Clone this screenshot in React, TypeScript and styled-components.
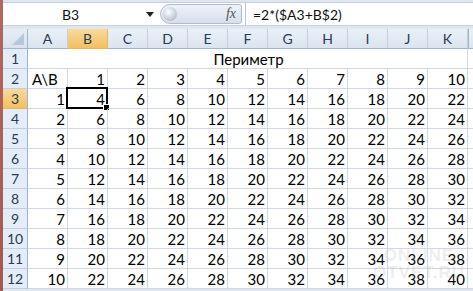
import styled, { createGlobalStyle } from "styled-components";

const GlobalStyle = createGlobalStyle`
  html, body {
    margin: 0;
    padding: 0;
    background: #ffffff;
  }
  body {
    font-family: Lato, "Open Sans", "Liberation Sans", sans-serif;
  }
`;

const COLS = ["A", "B", "C", "D", "E", "F", "G", "H", "I", "J", "K"];
const SEL_COL = 1;
const SEL_ROW = 3;

const Window = styled.div`
  display: flex;
  width: 473px;
  height: 291px;
  overflow: hidden;
  position: relative;
`;

const Edge = styled.div`
  width: 3px;
  background: linear-gradient(#b5675f, #a55850);
  flex-shrink: 0;
`;

const Main = styled.div`
  flex: 1;
  display: flex;
  flex-direction: column;
  background: #dfe6ef;
`;

const FormulaBar = styled.div`
  display: flex;
  align-items: stretch;
  height: 22px;
  margin-top: 2px;
  background: #ffffff;
  border-top: 1px solid #c5d0de;
  border-bottom: 1px solid #c5d0de;
`;

const NameBox = styled.div`
  width: 157px;
  display: flex;
  align-items: center;
  position: relative;
  font-size: 14px;
  color: #111;
`;

const NameText = styled.span`
  flex: 1;
  text-align: center;
  padding-right: 8px;
`;

const Arrow = styled.span`
  width: 0;
  height: 0;
  border-left: 4px solid transparent;
  border-right: 4px solid transparent;
  border-top: 5px solid #222;
  margin-right: 6px;
`;

const FxButton = styled.div`
  width: 82px;
  margin: 1px 0;
  display: flex;
  align-items: center;
  justify-content: space-between;
  border-radius: 11px 3px 3px 11px;
  background: linear-gradient(#eef2f8, #d6dfeb);
  border: 1px solid #aebdd0;
  box-sizing: border-box;
`;

const Knob = styled.span`
  width: 14px;
  height: 14px;
  border-radius: 50%;
  margin-left: 2px;
  background: radial-gradient(circle at 40% 35%, #ffffff, #b9c4d1 70%, #9aa8b9);
`;

const Fx = styled.span`
  font-family: "Liberation Serif", serif;
  font-style: italic;
  font-size: 14px;
  color: #555;
  margin-right: 5px;
`;

const FormulaInput = styled.div`
  flex: 1;
  display: flex;
  align-items: center;
  padding-left: 7px;
  margin-left: 3px;
  border-left: 1px solid #b8c5d6;
  font-size: 14px;
  color: #111;
`;

const Sheet = styled.div`
  margin-top: 3px;
  display: grid;
  grid-template-columns: 25px repeat(11, 40px) 1fr;
  grid-auto-rows: 20px;
  background: #ffffff;
`;

const Corner = styled.div`
  background: linear-gradient(#e7edf5, #d9e2ee);
  border-right: 1px solid #9eb6ce;
  border-bottom: 1px solid #9eb6ce;
  box-sizing: border-box;
  position: relative;
  &::after {
    content: "";
    position: absolute;
    right: 3px;
    bottom: 3px;
    border-left: 12px solid transparent;
    border-bottom: 12px solid #b7c8dc;
  }
`;

const ColHead = styled.div<{ $sel?: boolean }>`
  display: flex;
  align-items: center;
  justify-content: center;
  box-sizing: border-box;
  font-size: 14px;
  color: #2a3b55;
  background: ${(p) =>
    p.$sel
      ? "linear-gradient(#f9d99f, #f1c15f)"
      : "linear-gradient(#eaf0f7, #dbe4ef)"};
  border-right: 1px solid ${(p) => (p.$sel ? "#f2b44e" : "#c0cfdf")};
  border-bottom: 1px solid ${(p) => (p.$sel ? "#f2b44e" : "#9eb6ce")};
`;

const HeadFill = styled.div`
  background: linear-gradient(#eaf0f7, #dbe4ef);
  border-bottom: 1px solid #9eb6ce;
  border-left: 1px solid #9eb6ce;
`;

const RowHead = styled.div<{ $sel?: boolean }>`
  display: flex;
  align-items: center;
  justify-content: center;
  box-sizing: border-box;
  font-size: 14px;
  color: #2a3b55;
  background: ${(p) =>
    p.$sel ? "linear-gradient(#f9d99f, #f1c15f)" : "#e4ecf7"};
  border-right: 1px solid #9eb6ce;
  border-bottom: 1px solid ${(p) => (p.$sel ? "#f2b44e" : "#c0cfdf")};
`;

const Cell = styled.div<{ $align?: "left" | "right" | "center"; $span?: number }>`
  display: flex;
  align-items: flex-end;
  justify-content: ${(p) =>
    p.$align === "left" ? "flex-start" : p.$align === "center" ? "center" : "flex-end"};
  grid-column: ${(p) => (p.$span ? `span ${p.$span}` : "auto")};
  box-sizing: border-box;
  padding: 0 2px 0 4px;
  font-size: 15px;
  line-height: 18px;
  color: #000;
  border-right: 1px solid #d0d7e5;
  border-bottom: 1px solid #d0d7e5;
  position: relative;
`;

const Selected = styled.div`
  position: absolute;
  left: -2px;
  top: -2px;
  right: -1px;
  bottom: -1px;
  border: 2px solid #000;
  pointer-events: none;
  &::after {
    content: "";
    position: absolute;
    right: -4px;
    bottom: -4px;
    width: 5px;
    height: 5px;
    background: #000;
    border: 1px solid #fff;
  }
`;

const Filler = styled.div`
  border-bottom: 1px solid #d0d7e5;
`;

const Watermark = styled.div`
  position: absolute;
  right: 8px;
  bottom: 10px;
  font-family: "Liberation Sans", sans-serif;
  font-weight: bold;
  font-size: 17px;
  line-height: 17px;
  letter-spacing: 1px;
  color: rgba(150, 150, 150, 0.18);
  text-align: center;
  pointer-events: none;
`;

function App() {
  const rows: JSX.Element[] = [];

  rows.push(<Corner key="corner" />);
  COLS.forEach((c, i) => (
    rows.push(
      <ColHead key={"h" + c} $sel={i === SEL_COL}>
        {c}
      </ColHead>
    )
  ));
  rows.push(<HeadFill key="hfill" />);

  // row 1: merged title
  rows.push(<RowHead key="r1">1</RowHead>);
  rows.push(
    <Cell key="title" $span={11} $align="center">
      Периметр
    </Cell>
  );
  rows.push(<Filler key="f1" />);

  // row 2: B values
  rows.push(<RowHead key="r2">2</RowHead>);
  rows.push(
    <Cell key="ab" $align="left">
      A\B
    </Cell>
  );
  for (let b = 1; b <= 10; b++) {
    rows.push(<Cell key={"b" + b}>{b}</Cell>);
  }
  rows.push(<Filler key="f2" />);

  for (let a = 1; a <= 10; a++) {
    const r = a + 2;
    rows.push(
      <RowHead key={"r" + r} $sel={r === SEL_ROW}>
        {r}
      </RowHead>
    );
    rows.push(<Cell key={"a" + a}>{a}</Cell>);
    for (let b = 1; b <= 10; b++) {
      rows.push(
        <Cell key={a + "-" + b}>
          {2 * (a + b)}
          {r === SEL_ROW && b === SEL_COL && <Selected />}
        </Cell>
      );
    }
    rows.push(<Filler key={"f" + r} />);
  }

  return (
    <>
      <GlobalStyle />
      <Window>
        <Edge />
        <Main>
          <FormulaBar>
            <NameBox>
              <NameText>B3</NameText>
              <Arrow />
            </NameBox>
            <FxButton>
              <Knob />
              <Fx>fx</Fx>
            </FxButton>
            <FormulaInput>=2*($A3+B$2)</FormulaInput>
          </FormulaBar>
          <Sheet>{rows}</Sheet>
        </Main>
        <Watermark>
          ONLINE
          <br />
          OTVET.RU
        </Watermark>
      </Window>
    </>
  );
}

export default App;
